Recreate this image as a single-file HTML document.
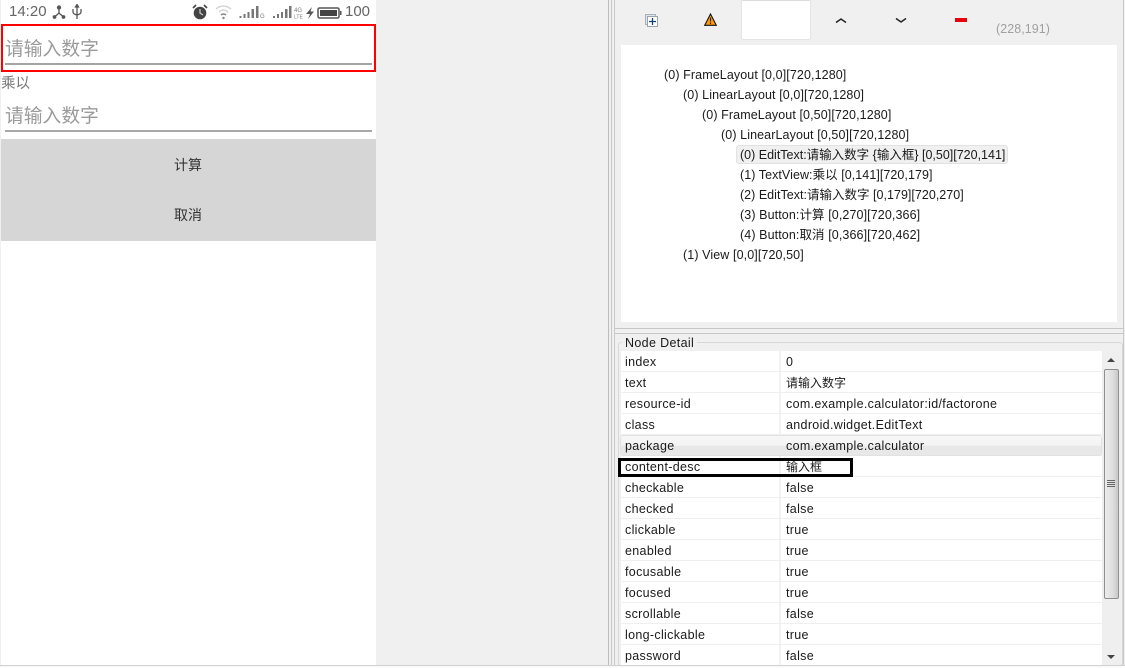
<!DOCTYPE html>
<html><head><meta charset="utf-8">
<style>
html,body{margin:0;padding:0;background:#f0f0f0}
#r{position:relative;width:1125px;height:668px;overflow:hidden;background:#f0f0f0;font-family:"Liberation Sans","Noto Sans CJK SC",sans-serif;}
#r div,#r svg{position:absolute}
.t{font-size:12.5px;color:#1a1a1a;white-space:nowrap;line-height:16px;height:16px;letter-spacing:.1px}
.l,.v{letter-spacing:.32px}
.l{left:625px}
.v{left:786px}
.c{font-size:12px;letter-spacing:0}
.ln{left:621px;width:481px;height:1px;background:#efefef}
.g{color:#9a9a9a;font-size:18.8px;line-height:24px;white-space:nowrap}
</style></head><body>
<div id="r">
<!-- phone -->
<div style="left:1px;top:0;width:375px;height:665px;background:#fff"></div>
<div style="left:9px;top:3px;font-size:15px;line-height:18px;color:#666">14:20</div>
<svg style="left:52px;top:4px" width="34" height="16" viewBox="0 0 34 16" fill="none" stroke="#555" stroke-width="1.3">
<path d="M7 4V9L2.500 13M7 9L11.500 13"/><circle cx="7" cy="3.500" r="1.500" fill="#555"/><circle cx="2.500" cy="13" r="1.200" fill="#555"/><circle cx="11.500" cy="13" r="1.200" fill="#555"/>
<path d="M25 2V15M21 5V8Q21 10 25 11M29 5V8Q29 10 25 11"/><path d="M23.500 3L25 0.500L26.500 3Z" fill="#555"/>
</svg>
<svg style="left:190px;top:3px" width="160" height="18" viewBox="0 0 160 18">
<circle cx="10" cy="10" r="6.300" fill="#444"/><path d="M10 6V10L13 12" stroke="#ccc" stroke-width="1.200" fill="none"/><path d="M3 5L6 2M17 5L14 2" stroke="#444" stroke-width="1.600"/>
<path d="M26 6Q33 0 41 6M29 9Q33 5 38 9" stroke="#d4d4d4" stroke-width="1.500" fill="none"/><path d="M31 12Q33.500 10 36 12" stroke="#888" stroke-width="1.500" fill="none"/><circle cx="33.500" cy="15" r="1.200" fill="#888"/>
<path d="M49.500 13h2v2h-2zM53.500 11h2v4h-2zM57.500 9h2v6h-2zM61.500 6h2.500v9h-2.500zM66 3h2.500v12H66z" fill="#777"/>
<text x="70" y="15" font-size="6" fill="#777" font-family="Liberation Sans">G</text>
<path d="M83 13h2v2h-2zM87 11h2v4h-2zM91 9h2v6h-2zM95 6h2.500v9H95zM99 3h2.500v12H99z" fill="#777"/>
<text x="104" y="9" font-size="6" fill="#777" font-family="Liberation Sans">4G</text>
<text x="104" y="15.500" font-size="5" fill="#777" font-family="Liberation Sans">LTE</text>
<path d="M122 4L116 11H120L118 16L124 8.500H120.500Z" fill="#555"/>
<rect x="128" y="5" width="21" height="10" rx="1.500" fill="#fff" stroke="#555" stroke-width="1.500"/><rect x="130" y="7" width="17" height="6" fill="#444"/><rect x="150" y="8" width="1.500" height="4" fill="#555"/>
</svg>
<div style="left:345px;top:3px;font-size:15px;line-height:18px;color:#666">100</div>

<div class="g" style="left:5px;top:37px">请输入数字</div>
<div style="left:5px;top:63px;width:367px;height:2px;background:#a4a4a4"></div>
<div style="left:1px;top:24px;width:371px;height:44px;border:2px solid #f00"></div>
<div style="left:1px;top:76px;font-size:14.500px;line-height:17px;color:#777">乘以</div>
<div class="g" style="left:5px;top:104px">请输入数字</div>
<div style="left:5px;top:130px;width:367px;height:2px;background:#a8a8a8"></div>
<div style="left:1px;top:139px;width:375px;height:102px;background:#d6d6d6"></div>
<div style="left:174px;top:157px;font-size:14px;line-height:17px;color:#333">计算</div>
<div style="left:174px;top:207px;font-size:14px;line-height:17px;color:#333">取消</div>

<!-- sashes -->
<div style="left:608px;top:0;width:1px;height:668px;background:#bcbcbc"></div>
<div style="left:611px;top:0;width:1px;height:668px;background:#c8c8c8"></div>
<div style="left:614px;top:0;width:1px;height:666px;background:#c8c8c8"></div>
<div style="left:1123px;top:0;width:1px;height:666px;background:#c8c8c8"></div>

<!-- toolbar -->
<svg style="left:645px;top:14px" width="15" height="15" viewBox="0 0 15 15">
<rect x="0.500" y="0.500" width="10" height="10" fill="#dfe6ee" stroke="#a8b0b8"/>
<rect x="2.500" y="2.500" width="10" height="10" fill="#fff" stroke="#9aa2aa"/>
<path d="M7.500 4V11M4 7.500H11" stroke="#0f3f78" stroke-width="1.300"/>
</svg>
<svg style="left:704px;top:13px" width="13" height="13" viewBox="0 0 13 13">
<path d="M6.500 1L12.300 12.300H0.700Z" fill="#ff9a00" stroke="#111" stroke-width="1.100"/>
<path d="M6.500 4.500V8.500M6.500 9.500V11" stroke="#222" stroke-width="1.100"/>
</svg>
<div style="left:741px;top:0;width:68px;height:38px;background:#fff;border:1px solid #e4e4e4;border-top:1px solid #ddd;border-radius:2px"></div>
<svg style="left:834px;top:15px" width="14" height="10" viewBox="0 0 14 10" fill="none" stroke="#222" stroke-width="1.500"><path d="M2 7.500L7 4L12 7.500"/></svg>
<svg style="left:894px;top:15px" width="14" height="10" viewBox="0 0 14 10" fill="none" stroke="#222" stroke-width="1.500"><path d="M2 3.500L7 7L12 3.500"/></svg>
<div style="left:955px;top:18px;width:12px;height:4px;background:#e8000c"></div>
<div class="t" style="left:996px;top:21px;color:#a0a0a0;letter-spacing:.05px">(228,191)</div>

<!-- tree -->
<div style="left:621px;top:45px;width:496px;height:277px;background:#fff"></div>
<div style="left:736px;top:145px;width:270px;height:17px;background:#f0f0f0;border:1px solid #e2e2e2;border-radius:3px"></div>
<div class="t" style="left:664px;top:67px">(0) FrameLayout [0,0][720,1280]</div>
<div class="t" style="left:683px;top:87px">(0) LinearLayout [0,0][720,1280]</div>
<div class="t" style="left:702px;top:107px">(0) FrameLayout [0,50][720,1280]</div>
<div class="t" style="left:721px;top:127px">(0) LinearLayout [0,50][720,1280]</div>
<div class="t" style="left:740px;top:147px;letter-spacing:0">(0) EditText:请输入数字 {输入框} [0,50][720,141]</div>
<div class="t" style="left:740px;top:167px;letter-spacing:.06px">(1) TextView:乘以 [0,141][720,179]</div>
<div class="t" style="left:740px;top:187px;letter-spacing:.02px">(2) EditText:请输入数字 [0,179][720,270]</div>
<div class="t" style="left:740px;top:207px">(3) Button:计算 [0,270][720,366]</div>
<div class="t" style="left:740px;top:227px">(4) Button:取消 [0,366][720,462]</div>
<div class="t" style="left:683px;top:247px">(1) View [0,0][720,50]</div>

<!-- detail panel -->
<div style="left:614px;top:328px;width:510px;height:1px;background:#c8c8c8"></div>
<div style="left:614px;top:333px;width:510px;height:1px;background:#c8c8c8"></div>
<div style="left:618px;top:342px;width:503px;height:322px;border:1px solid #d8d8d8;border-radius:3px"></div>
<div class="t" style="left:622px;top:335px;background:#f0f0f0;padding:0 3px;letter-spacing:.35px">Node Detail</div>
<div style="left:621px;top:351px;width:481px;height:314px;background:#fff"></div>
<div style="left:779px;top:351px;width:2px;height:314px;background:#f2f2f2"></div>

<div class="ln" style="top:371px"></div><div class="ln" style="top:392px"></div><div class="ln" style="top:413px"></div><div class="ln" style="top:434px"></div><div class="ln" style="top:455px"></div><div class="ln" style="top:476px"></div><div class="ln" style="top:497px"></div><div class="ln" style="top:518px"></div><div class="ln" style="top:539px"></div><div class="ln" style="top:560px"></div><div class="ln" style="top:581px"></div><div class="ln" style="top:602px"></div><div class="ln" style="top:623px"></div><div class="ln" style="top:644px"></div>

<div style="left:620px;top:435px;width:480px;height:19px;border:1px solid #e2e2e2;border-radius:3px;background:linear-gradient(#f6f6f6,#f4f4f4 50%,#e8e8e8 52%,#e8e8e8)"></div>

<div class="t l" style="top:354px">index</div><div class="t v" style="top:354px">0</div>
<div class="t l" style="top:375px">text</div><div class="t v c" style="top:375px">请输入数字</div>
<div class="t l" style="top:396px">resource-id</div><div class="t v" style="top:396px">com.example.calculator:id/factorone</div>
<div class="t l" style="top:417px">class</div><div class="t v" style="top:417px">android.widget.EditText</div>
<div class="t l" style="top:438px">package</div><div class="t v" style="top:438px">com.example.calculator</div>
<div class="t l" style="top:459px">content-desc</div><div class="t v c" style="top:459px">输入框</div>
<div class="t l" style="top:480px">checkable</div><div class="t v" style="top:480px">false</div>
<div class="t l" style="top:501px">checked</div><div class="t v" style="top:501px">false</div>
<div class="t l" style="top:522px">clickable</div><div class="t v" style="top:522px">true</div>
<div class="t l" style="top:543px">enabled</div><div class="t v" style="top:543px">true</div>
<div class="t l" style="top:564px">focusable</div><div class="t v" style="top:564px">true</div>
<div class="t l" style="top:585px">focused</div><div class="t v" style="top:585px">true</div>
<div class="t l" style="top:606px">scrollable</div><div class="t v" style="top:606px">false</div>
<div class="t l" style="top:627px">long-clickable</div><div class="t v" style="top:627px">true</div>
<div class="t l" style="top:648px">password</div><div class="t v" style="top:648px">false</div>

<div style="left:618px;top:458px;width:229px;height:13px;border:3px solid #000"></div>

<!-- scrollbar -->
<div style="left:1102px;top:351px;width:18px;height:314px;background:#efefef"></div>
<div style="left:1104px;top:369px;width:13px;height:228px;border:1px solid #8f8f8f;border-radius:2px;background:linear-gradient(90deg,#ececec,#dedede 60%,#c8c8c8)"></div>
<svg style="left:1106px;top:357px" width="10" height="6" viewBox="0 0 10 6"><path d="M5 1L9 5H1Z" fill="#444"/></svg>
<svg style="left:1106px;top:654px" width="10" height="6" viewBox="0 0 10 6"><path d="M1 1H9L5 5Z" fill="#444"/></svg>
<svg style="left:1107px;top:479px" width="8" height="9" viewBox="0 0 8 9" stroke="#666" stroke-width="1"><path d="M0 1.500H8M0 3.500H8M0 5.500H8M0 7.500H8"/></svg>

<!-- bottom strip -->
<div style="left:0;top:665px;width:1125px;height:1px;background:#d0d0d0"></div>
<div style="left:0;top:666px;width:1125px;height:2px;background:#fafafa"></div>
</div>
</body></html>
